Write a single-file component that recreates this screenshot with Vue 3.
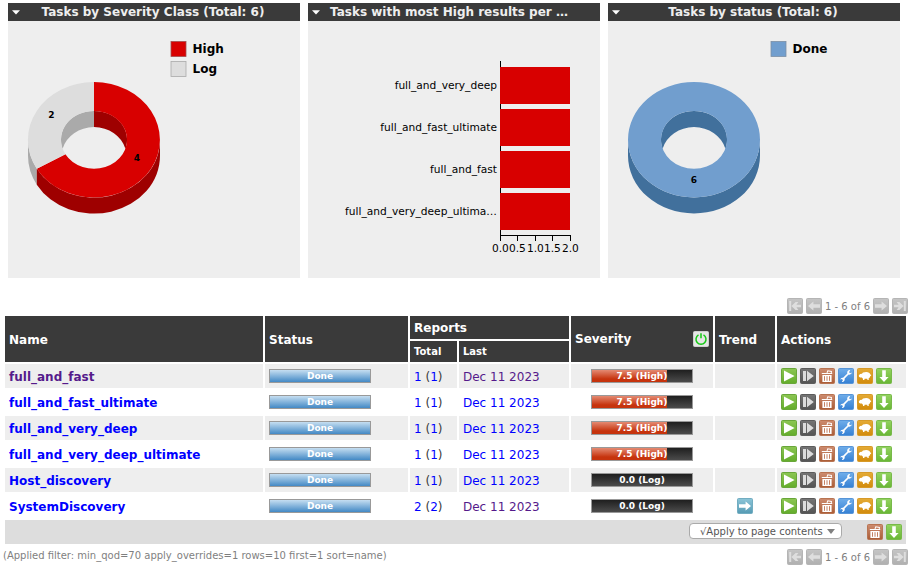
<script setup>
const donuts = {
  severity: {
    legend: [
      { label: 'High', color: '#d80000', edge: '#a05050' },
      { label: 'Log', color: '#dddddd', edge: '#aaaaaa' },
    ],
  },
  status: { legend: [{ label: 'Done', color: '#719ece', edge: '#7d8fa5' }] },
}
const panels = [
  { kind: 'severity', title: 'Tasks by Severity Class (Total: 6)' },
  { kind: 'bars', title: 'Tasks with most High results per …' },
  { kind: 'status', title: 'Tasks by status (Total: 6)' },
]
const bars = ['full_and_very_deep', 'full_and_fast_ultimate', 'full_and_fast', 'full_and_very_deep_ultima…']
const ticks = [
  { x: 192.5, label: '0.0' },
  { x: 209.5, label: '0.5' },
  { x: 227.5, label: '1.0' },
  { x: 244.5, label: '1.5' },
  { x: 262.5, label: '2.0' },
]
const tasks = [
  { name: 'full_and_fast', visited: true, total: 1, seen: true, score: 7.5, level: 'High' },
  { name: 'full_and_fast_ultimate', total: 1, score: 7.5, level: 'High' },
  { name: 'full_and_very_deep', total: 1, score: 7.5, level: 'High' },
  { name: 'full_and_very_deep_ultimate', total: 1, score: 7.5, level: 'High' },
  { name: 'Host_discovery', total: 1, score: 0, level: 'Log' },
  { name: 'SystemDiscovery', total: 2, seen: true, score: 0, level: 'Log', trend: true },
]
const actions = ['play', 'resume', 'trash', 'wrench', 'sheep', 'download']
</script>

<template>
  <div class="page">
    <svg class="defs" width="0" height="0" aria-hidden="true">
      <defs>
        <linearGradient id="g-green" x2="0" y2="1"><stop offset="0" stop-color="#8cc653" /><stop offset="1" stop-color="#63ac2b" /></linearGradient>
        <linearGradient id="g-dark" x2="0" y2="1"><stop offset="0" stop-color="#757575" /><stop offset="1" stop-color="#545454" /></linearGradient>
        <linearGradient id="g-brown" x2="0" y2="1"><stop offset="0" stop-color="#cd8c70" /><stop offset="1" stop-color="#aa5c36" /></linearGradient>
        <linearGradient id="g-blue" x2="0" y2="1"><stop offset="0" stop-color="#70aeea" /><stop offset="1" stop-color="#3580d4" /></linearGradient>
        <linearGradient id="g-orange" x2="0" y2="1"><stop offset="0" stop-color="#e4ab36" /><stop offset="1" stop-color="#d28b0c" /></linearGradient>
        <linearGradient id="g-lime" x2="0" y2="1"><stop offset="0" stop-color="#94d361" /><stop offset="1" stop-color="#68b635" /></linearGradient>
        <linearGradient id="g-teal" x2="0" y2="1"><stop offset="0" stop-color="#8cc5d8" /><stop offset="1" stop-color="#559ab3" /></linearGradient>
        <linearGradient id="g-gray" x2="0" y2="1"><stop offset="0" stop-color="#c5c5c5" /><stop offset="1" stop-color="#b0b0b0" /></linearGradient>
      </defs>
      <symbol id="i-play" viewBox="0 0 16 16">
        <rect x=".5" y=".5" width="15" height="15" rx="1" fill="url(#g-green)" stroke="#69a63a" />
        <path d="M3 2.4V13.6L13.6 8Z" fill="#fff" />
      </symbol>
      <symbol id="i-resume" viewBox="0 0 16 16">
        <rect x=".5" y=".5" width="15" height="15" rx="1" fill="url(#g-dark)" stroke="#5c5c5c" />
        <path d="M3 3H6V13H3ZM7 2.8L13.8 8L7 13.2Z" fill="#dcdcdc" />
      </symbol>
      <symbol id="i-trash" viewBox="0 0 16 16">
        <rect x=".5" y=".5" width="15" height="15" rx="1" fill="url(#g-brown)" stroke="#b87452" />
        <path d="M2.8 5.5H13.2M8 4.9L8.8 2.8L12.4 3.4L12.3 4.9" fill="none" stroke="#fff" stroke-width="1.1" />
        <path d="M3.4 7H12.6V14H3.4Z" fill="#fff" />
        <path d="M5.5 8.2V12.8M8 8.2V12.8M10.5 8.2V12.8" stroke="#bd7350" stroke-width=".9" />
      </symbol>
      <symbol id="i-wrench" viewBox="0 0 16 16">
        <rect x=".5" y=".5" width="15" height="15" rx="1" fill="url(#g-blue)" stroke="#5795d8" />
        <path d="M4.6 11.4L11 5" stroke="#fff" stroke-width="1.7" />
        <path d="M12.2 2.1A2.5 2.5 0 0 0 9.4 5.6A2.5 2.5 0 0 0 13.9 4.6L12.2 5.2L11 4.3Z" fill="#fff" />
        <path d="M2.2 11.6A2.5 2.5 0 0 1 6.5 10.5A2.5 2.5 0 0 1 3.8 14L5 12L4 11Z" fill="#fff" />
      </symbol>
      <symbol id="i-sheep" viewBox="0 0 16 16">
        <rect x=".5" y=".5" width="15" height="15" rx="1" fill="url(#g-orange)" stroke="#d79a28" />
        <path d="M1.8 7.6L3 6L4.9 5.7L6 4.5L7.6 4.2L9.2 4L10.9 4.3L12.4 5L13.3 6.3L14.3 7.5L13.2 8.3L12.8 9.6L11.7 10.3V12H10.5L10.2 10.8H7.6L7.3 12H6.1L5.8 10.5L4.8 9.6L3.2 9.5L2 8.7Z" fill="#fff" />
      </symbol>
      <symbol id="i-download" viewBox="0 0 16 16">
        <rect x=".5" y=".5" width="15" height="15" rx="1" fill="url(#g-lime)" stroke="#78b94a" />
        <path d="M6.2 2.2H9.8V9H12.6L8 14L3.4 9H6.2Z" fill="#fff" />
      </symbol>
      <symbol id="i-same" viewBox="0 0 16 16">
        <rect x=".5" y=".5" width="15" height="15" rx="1" fill="url(#g-teal)" stroke="#72adc1" />
        <path d="M2 6.2H8.6V3.4L14 8L8.6 12.6V9.8H2Z" fill="#fff" />
      </symbol>
      <symbol id="i-next" viewBox="0 0 16 16">
        <rect x=".5" y=".5" width="15" height="15" rx="1" fill="url(#g-gray)" stroke="#b5b5b5" />
        <path d="M2 6.2H8.6V3.4L14 8L8.6 12.6V9.8H2Z" fill="#dedede" />
      </symbol>
      <symbol id="i-last" viewBox="0 0 16 16">
        <rect x=".5" y=".5" width="15" height="15" rx="1" fill="url(#g-gray)" stroke="#b5b5b5" />
        <path d="M2 6.8H6.6L4.6 4H7.4L11.6 8L7.4 12H4.6L6.6 9.2H2ZM11.8 3H13.8V13H11.8Z" fill="#dedede" />
      </symbol>
      <symbol id="i-power" viewBox="0 0 16 16">
        <rect x=".5" y=".5" width="15" height="15" rx="1" fill="#e6e6e6" stroke="#cfcfcf" />
        <path d="M5.5 3.9A5 5 0 1 0 10.5 3.9M8 2.2V7.2" fill="none" stroke="#16c816" stroke-width="1.5" />
      </symbol>
    </svg>

    <section class="charts">
      <article v-for="panel in panels" :key="panel.kind" class="panel" :class="panel.kind">
        <header class="panel-head">
          <svg class="caret" width="8" height="5" viewBox="0 0 8 5"><path d="M0 .2H8L4 4.4Z" fill="#fff" /></svg>
          <h2>{{ panel.title }}</h2>
        </header>

        <svg v-if="panel.kind === 'bars'" class="plot" width="292" height="257" viewBox="0 0 292 257">
          <path d="M192.5 40V214.5H262.5" fill="none" stroke="#000" />
          <path v-for="tick in ticks" :key="tick.label" :d="`M${tick.x} 214V220`" stroke="#000" />
          <g v-for="(bar, i) in bars" :key="bar">
            <rect x="192" :y="46 + i * 42" width="70" height="37" fill="#d80000" />
            <text class="axis-label" x="189" :y="68 + i * 42" text-anchor="end">{{ bar }}</text>
          </g>
          <text v-for="tick in ticks" :key="tick.label" class="axis-label" :x="tick.x - 0.1" y="231" text-anchor="middle">{{ tick.label }}</text>
        </svg>

        <svg v-else class="plot" width="292" height="257" viewBox="0 0 292 257">
          <g v-if="panel.kind === 'severity'">
            <path d="M20 118.8A66 57.7 0 0 0 28.8 147.7V163.7A66 57.7 0 0 1 20 134.8Z" fill="#aaaaaa" />
            <path d="M28.8 147.7A66 57.7 0 0 0 152 118.8V134.8A66 57.7 0 0 1 28.8 163.7Z" fill="#9e0000" />
            <path d="M86 89.9A33 28.9 0 0 0 54.6 127.8A33 28.9 0 0 1 86 106Z" fill="#aaaaaa" />
            <path d="M86 89.9A33 28.9 0 0 1 117.4 127.8A33 28.9 0 0 0 86 106Z" fill="#9e0000" />
            <path d="M86 61.1A66 57.7 0 1 1 28.8 147.7L57.4 133.2A33 28.9 0 1 0 86 89.9Z" fill="#d80000" />
            <path d="M86 61.1A66 57.7 0 0 0 28.8 147.7L57.4 133.2A33 28.9 0 0 1 86 89.9Z" fill="#dddddd" />
            <text class="slice-label" x="43.3" y="97" text-anchor="middle">2</text>
            <text class="slice-label" x="129" y="140" text-anchor="middle">4</text>
          </g>
          <g v-else>
            <path d="M20 118.8A66 57.7 0 0 0 152 118.8V134.8A66 57.7 0 0 1 20 134.8Z" fill="#41709c" />
            <path d="M86 89.9A33 28.9 0 0 0 54.6 127.8A33 28.9 0 0 1 86 106Z" fill="#41709c" />
            <path d="M86 89.9A33 28.9 0 0 1 117.4 127.8A33 28.9 0 0 0 86 106Z" fill="#41709c" />
            <path d="M20 118.8A66 57.7 0 0 1 152 118.8A66 57.7 0 0 1 20 118.8ZM53 118.8A33 28.9 0 0 0 119 118.8A33 28.9 0 0 0 53 118.8Z" fill="#719ece" fill-rule="evenodd" />
            <text class="slice-label" x="86" y="162" text-anchor="middle">6</text>
          </g>
          <g v-for="(item, i) in donuts[panel.kind].legend" :key="item.label">
            <rect x="163" :y="20.5 + i * 20" width="15" height="15" :fill="item.color" :stroke="item.edge" stroke-width=".8" />
            <text class="legend-label" x="184.5" :y="32 + i * 20">{{ item.label }}</text>
          </g>
        </svg>
      </article>
    </section>

    <nav class="pager">
      <svg class="icon flip"><use href="#i-last" /></svg>
      <svg class="icon flip"><use href="#i-next" /></svg>
      <span>1 - 6 of 6</span>
      <svg class="icon"><use href="#i-next" /></svg>
      <svg class="icon"><use href="#i-last" /></svg>
    </nav>

    <main class="table">
      <div class="row head">
        <div class="cell tall">Name</div>
        <div class="cell tall">Status</div>
        <div class="cell wide">Reports</div>
        <div class="cell tall severity-head"><span>Severity</span><svg class="icon"><use href="#i-power" /></svg></div>
        <div class="cell tall">Trend</div>
        <div class="cell tall">Actions</div>
        <div class="cell sub total">Total</div>
        <div class="cell sub last">Last</div>
      </div>
      <div v-for="task in tasks" :key="task.name" class="row task">
        <div class="cell text"><a class="name" :class="{ visited: task.visited }">{{ task.name }}</a></div>
        <div class="cell"><div class="meter done"><span>Done</span></div></div>
        <div class="cell text"><span><a>{{ task.total }}</a> (<a>{{ task.total }}</a>)</span></div>
        <div class="cell text"><a :class="{ visited: task.seen }">Dec 11 2023</a></div>
        <div class="cell center">
          <div class="meter">
            <div class="fill" :style="{ width: task.score * 10 + '%' }"></div>
            <span>{{ task.score.toFixed(1) }} ({{ task.level }})</span>
          </div>
        </div>
        <div class="cell center"><svg v-if="task.trend" class="icon"><use href="#i-same" /></svg></div>
        <div class="cell actions">
          <svg v-for="action in actions" :key="action" class="icon"><use :href="'#i-' + action" /></svg>
        </div>
      </div>
      <div class="bulk">
        <div class="select">
          <span>√Apply to page contents</span>
          <svg width="8" height="5" viewBox="0 0 8 5"><path d="M0 0H8L4 5Z" fill="#808080" /></svg>
        </div>
        <svg class="icon"><use href="#i-trash" /></svg>
        <svg class="icon"><use href="#i-download" /></svg>
      </div>
    </main>

    <footer class="foot">
      <p>(Applied filter: min_qod=70 apply_overrides=1 rows=10 first=1 sort=name)</p>
      <nav class="pager">
        <svg class="icon flip"><use href="#i-last" /></svg>
        <svg class="icon flip"><use href="#i-next" /></svg>
        <span>1 - 6 of 6</span>
        <svg class="icon"><use href="#i-next" /></svg>
        <svg class="icon"><use href="#i-last" /></svg>
      </nav>
    </footer>
  </div>
</template>

<style>
body {
  background: #fff;
  overflow: hidden;
}
</style>

<style scoped>
.page {
  box-sizing: border-box;
  width: 911px;
  height: 565px;
  padding-top: 3px;
  overflow: hidden;
  font-family: "DejaVu Sans", sans-serif;
  font-size: 12px;
  color: #3a3a3a;
}
.defs {
  position: absolute;
}
.charts {
  display: flex;
  gap: 8px;
  padding-left: 8px;
}
.panel {
  width: 292px;
  height: 275px;
  background: #eee;
}
.panel-head {
  display: flex;
  align-items: center;
  height: 18px;
  padding-left: 4px;
  background: #3a3a3a;
}
.panel-head h2 {
  flex: 1;
  margin: 0;
  padding-right: 14px;
  font-size: 12px;
  line-height: 18px;
  text-align: center;
  color: #eee;
}
.bars h2 {
  padding-right: 22px;
}
.plot {
  display: block;
}
.axis-label {
  font-size: 10.63px;
}
.slice-label {
  font-size: 9px;
  font-weight: bold;
}
.legend-label {
  font-size: 12px;
  font-weight: bold;
}
.icon {
  display: block;
  flex: none;
  width: 16px;
  height: 16px;
}
.flip {
  transform: scaleX(-1);
}
.pager {
  display: flex;
  justify-content: flex-end;
  align-items: center;
  gap: 3px;
  height: 16px;
  padding-right: 3px;
  font-size: 10px;
  color: #7f7f7f;
}
.charts + .pager {
  margin-top: 20px;
}
.pager span {
  width: 45px;
  white-space: nowrap;
}
.table {
  display: flex;
  flex-direction: column;
  gap: 2px;
  width: 901px;
  margin: 2px 0 0 5px;
}
.row {
  display: grid;
  grid-template-columns: 258px 143px 47px 110px 142px 60px 129px;
  gap: 2px;
}
.cell {
  display: flex;
  align-items: center;
  padding: 0 4px;
  white-space: nowrap;
}
.head {
  grid-template-rows: 23px 21px;
  font-weight: bold;
  color: #fff;
}
.head .cell {
  background: #3a3a3a;
}
.tall {
  grid-row: 1 / 3;
  padding-top: 2px;
}
.wide {
  grid-column: 3 / 5;
}
.sub {
  grid-row: 2;
  font-size: 10px;
}
.total {
  grid-column: 3;
}
.last {
  grid-column: 4;
}
.severity-head {
  justify-content: space-between;
  padding-top: 0;
}
.task {
  height: 24px;
}
.task:nth-child(even) .cell {
  background: #eee;
}
.text {
  padding-top: 2px;
}
.center {
  justify-content: center;
}
.actions {
  gap: 3px;
}
a {
  color: #00f;
}
a.visited {
  color: #551a8b;
}
.name {
  font-weight: bold;
}
.meter {
  position: relative;
  box-sizing: border-box;
  width: 102px;
  height: 14px;
  border: 1px solid #999;
  background: linear-gradient(#1f1f1f, #4b4b4b);
  font-size: 9px;
  font-weight: bold;
  line-height: 12px;
  text-align: center;
  color: #fff;
}
.meter.done {
  background: linear-gradient(#c5def1, #4389c5);
}
.fill {
  height: 12px;
  background: linear-gradient(#e48a72, #c6330d 75%);
}
.meter span {
  position: absolute;
  inset: 0;
}
.bulk {
  display: flex;
  align-items: center;
  justify-content: flex-end;
  gap: 3px;
  height: 24px;
  padding-right: 4px;
  box-sizing: border-box;
  background: #ddd;
}
.select {
  display: flex;
  align-items: center;
  justify-content: space-between;
  box-sizing: border-box;
  width: 153px;
  height: 16px;
  margin: 0 22px 2px 0;
  padding: 0 6px 0 10px;
  border: 1px solid #aaa;
  border-radius: 4px;
  background: #fff;
  font-size: 10px;
  color: #555;
}
.foot {
  display: flex;
  align-items: center;
  justify-content: space-between;
  height: 16px;
  margin-top: 5px;
  padding-left: 3px;
}
.foot p {
  margin: 0 0 4px;
  font-size: 10px;
  color: #7f7f7f;
}
</style>
